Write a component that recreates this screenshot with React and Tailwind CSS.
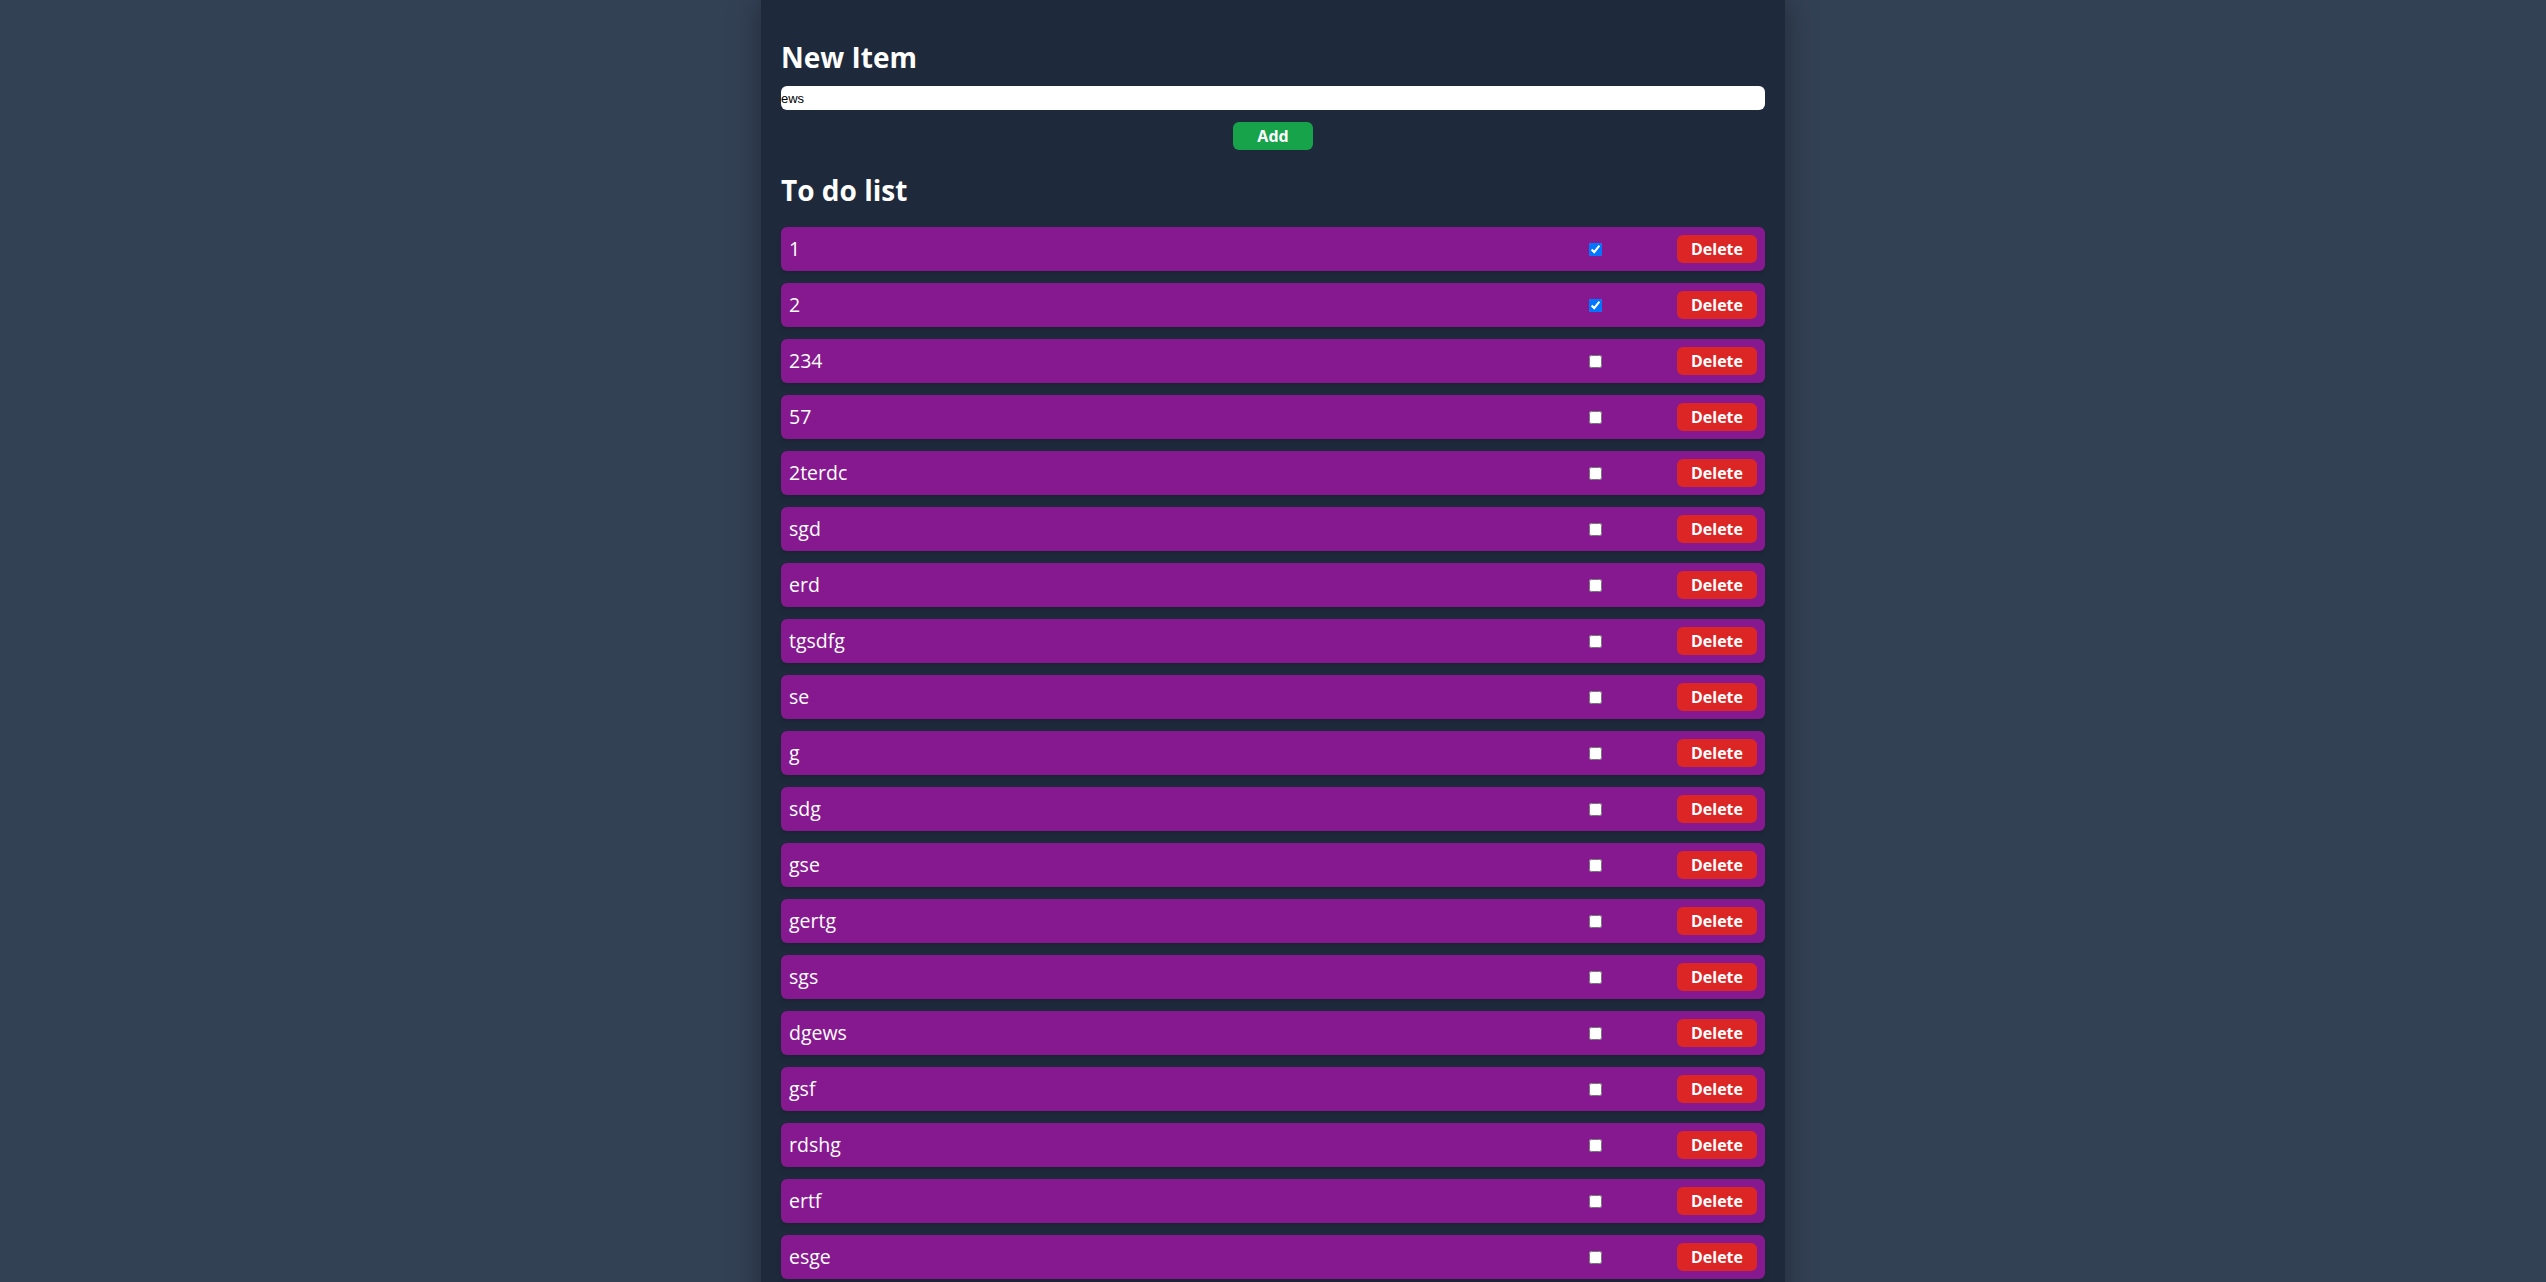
import React, { useState } from 'react';

const initialItems = [
  { id: 1, title: '1', completed: true },
  { id: 2, title: '2', completed: true },
  { id: 3, title: '234', completed: false },
  { id: 4, title: '57', completed: false },
  { id: 5, title: '2terdc', completed: false },
  { id: 6, title: 'sgd', completed: false },
  { id: 7, title: 'erd', completed: false },
  { id: 8, title: 'tgsdfg', completed: false },
  { id: 9, title: 'se', completed: false },
  { id: 10, title: 'g', completed: false },
  { id: 11, title: 'sdg', completed: false },
  { id: 12, title: 'gse', completed: false },
  { id: 13, title: 'gertg', completed: false },
  { id: 14, title: 'sgs', completed: false },
  { id: 15, title: 'dgews', completed: false },
  { id: 16, title: 'gsf', completed: false },
  { id: 17, title: 'rdshg', completed: false },
  { id: 18, title: 'ertf', completed: false },
  { id: 19, title: 'esge', completed: false },
];

function TodoItem({ item, onToggle, onDelete }) {
  return (
    <li className="flex items-center bg-[#86198f] rounded-md p-2 shadow-md">
      <span className="flex-1 text-white text-[19.5px] leading-7">{item.title}</span>
      <input
        type="checkbox"
        checked={item.completed}
        onChange={() => onToggle(item.id)}
        className="w-[13px] h-[13px] mr-[75px]"
      />
      <button
        onClick={() => onDelete(item.id)}
        className="w-20 h-7 rounded-md bg-[#dc2626] text-white font-bold text-base leading-6"
      >
        Delete
      </button>
    </li>
  );
}

export default function App() {
  const [newItem, setNewItem] = useState('ews');
  const [items, setItems] = useState(initialItems);

  const handleSubmit = (e) => {
    e.preventDefault();
    if (!newItem.trim()) return;
    setItems((prev) => [...prev, { id: Date.now(), title: newItem, completed: false }]);
    setNewItem('');
  };

  const toggleItem = (id) => {
    setItems((prev) => prev.map((it) => (it.id === id ? { ...it, completed: !it.completed } : it)));
  };

  const deleteItem = (id) => {
    setItems((prev) => prev.filter((it) => it.id !== id));
  };

  return (
    <div
      className="min-h-screen bg-[#334155]"
      style={{ fontFamily: '"Open Sans", "Noto Sans", sans-serif' }}
    >
      <div className="max-w-5xl mx-auto min-h-screen bg-[#1e293b] px-5 pt-[39px] pb-8 shadow-[0_0_30px_rgba(0,0,0,0.35)]">
        {/* Formulario */}
        <form onSubmit={handleSubmit} className="flex flex-col">
          <h1 className="text-white text-[28px] leading-9 font-bold">New Item</h1>
          <input
            type="text"
            value={newItem}
            onChange={(e) => setNewItem(e.target.value)}
            className="mt-[11px] h-6 w-full bg-white rounded-md text-[13px] text-black px-0 outline-none"
            style={{ fontFamily: '"Liberation Sans", Arial, sans-serif' }}
          />
          <button
            type="submit"
            className="mt-3 mx-auto w-20 h-7 rounded-md bg-[#16a34a] text-white font-bold text-base leading-6"
          >
            Add
          </button>
        </form>

        {/* Lista */}
        <h1 className="mt-[22px] text-white text-[28px] leading-9 font-bold">To do list</h1>
        <ul className="mt-[19px] flex flex-col gap-3">
          {items.map((item) => (
            <TodoItem key={item.id} item={item} onToggle={toggleItem} onDelete={deleteItem} />
          ))}
        </ul>
      </div>
    </div>
  );
}
